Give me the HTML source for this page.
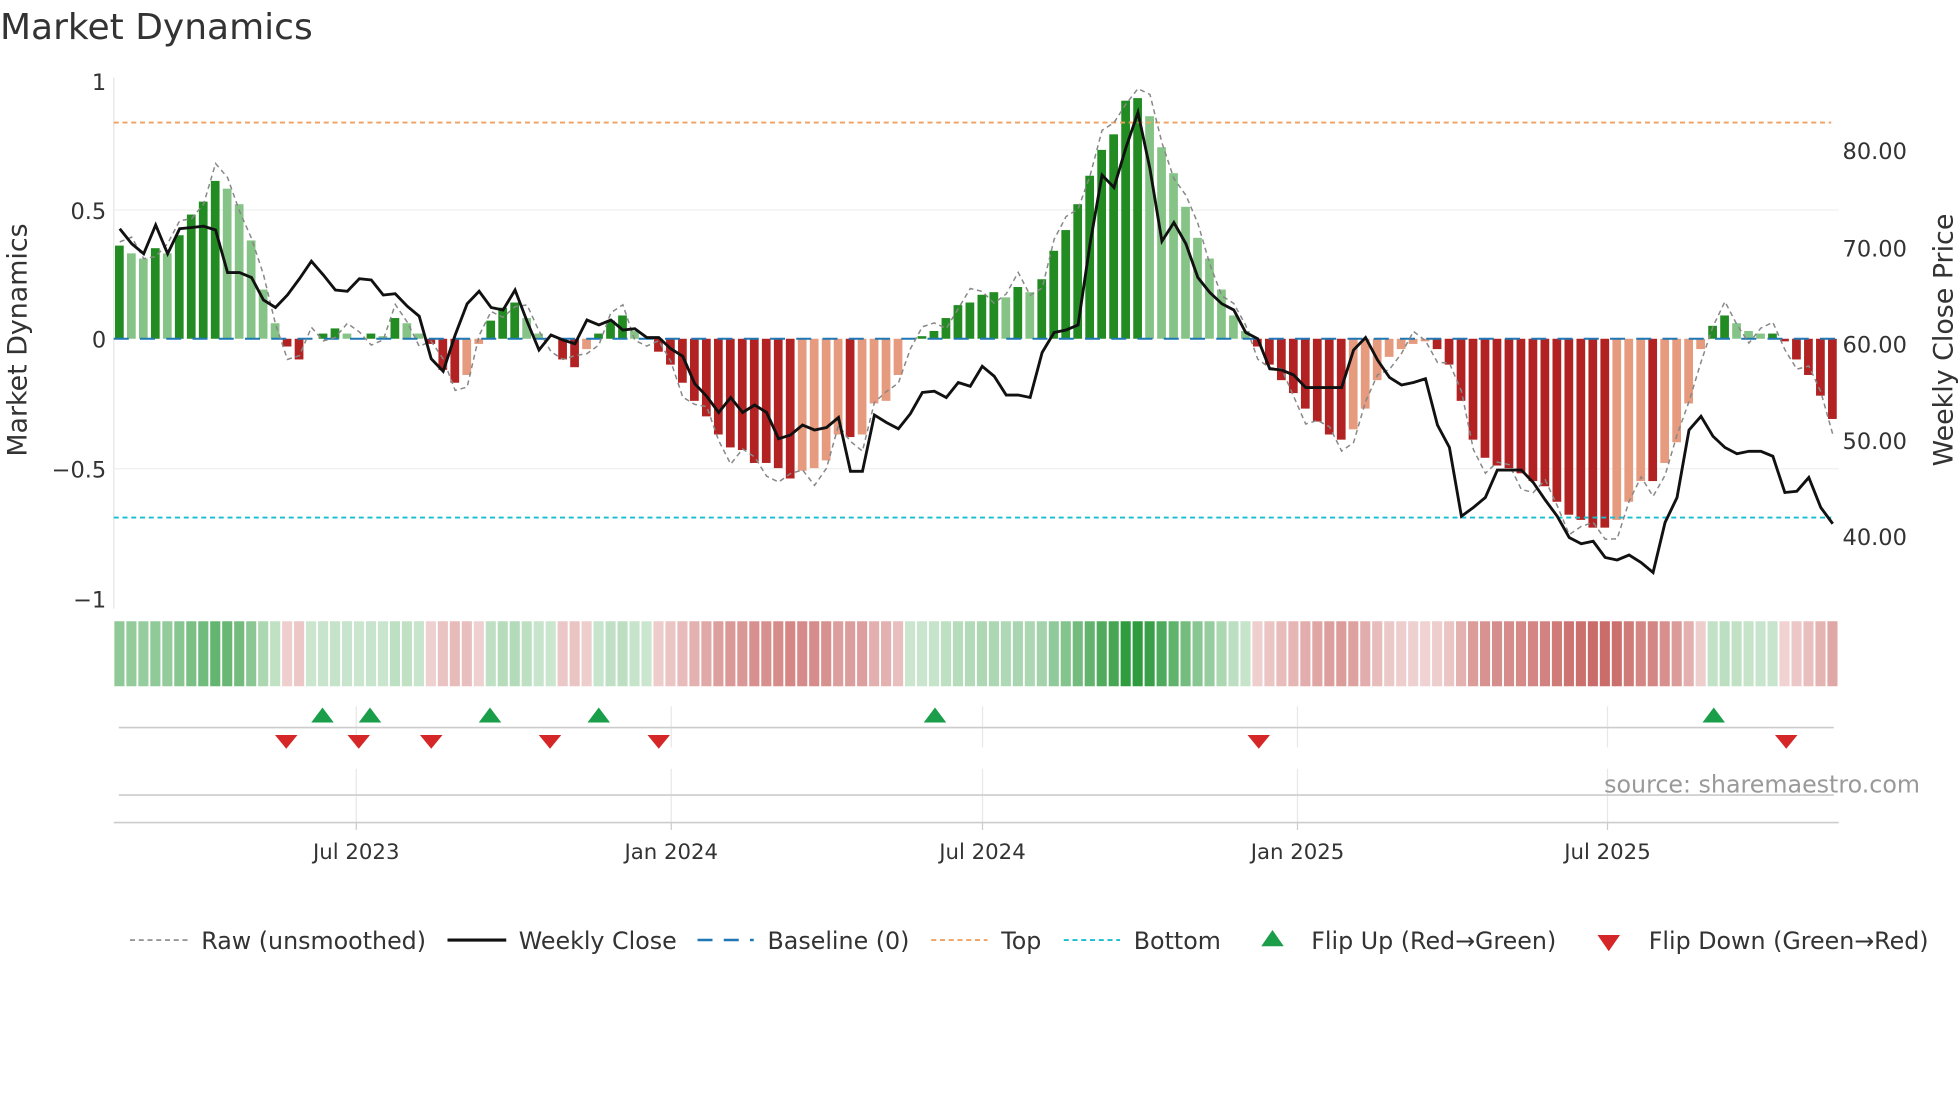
<!DOCTYPE html>
<html><head><meta charset="utf-8"><style>
html,body{margin:0;padding:0;background:#fff;}
svg{display:block;font-family:"DejaVu Sans","Liberation Sans",sans-serif;}
</style></head><body>
<svg id="c" width="1960" height="1102" viewBox="0 0 1568 881.6" xmlns="http://www.w3.org/2000/svg">
<text x="0" y="31" font-size="28.8" fill="#333">Market Dynamics</text>
<text transform="translate(21,272) rotate(-90)" text-anchor="middle" font-size="21.5" fill="#333">Market Dynamics</text>
<text transform="translate(1562,272) rotate(-90)" text-anchor="middle" font-size="21.5" fill="#333">Weekly Close Price</text>
<g font-size="18" fill="#333" text-anchor="end">
<text x="85" y="72">1</text><text x="85" y="175">0.5</text><text x="85" y="278">0</text><text x="85" y="382">−0.5</text><text x="85" y="486">−1</text>
</g>
<g font-size="18" fill="#333">
<text x="1474" y="127">80.00</text><text x="1474" y="205">70.00</text><text x="1474" y="282">60.00</text><text x="1474" y="359">50.00</text><text x="1474" y="436">40.00</text>
</g>
<line x1="91" y1="62" x2="91" y2="487" stroke="#e4e4e4"/>
<line x1="91" y1="168" x2="1471" y2="168" stroke="#eef0f0"/>
<line x1="91" y1="375" x2="1471" y2="375" stroke="#eef0f0"/>
<g id="bars"></g>
<line x1="91" y1="271" x2="1471" y2="271" stroke="#1f77b4" stroke-width="1.6" stroke-dasharray="12,9"/>
<line x1="91" y1="98" x2="1465" y2="98" stroke="#f0a060" stroke-width="1.5" stroke-dasharray="4,3"/>
<line x1="91" y1="414" x2="1465" y2="414" stroke="#17becf" stroke-width="1.5" stroke-dasharray="4,3"/>
<polyline id="raw" fill="none" stroke="#888" stroke-width="1.2" stroke-dasharray="4,3"/>
<polyline id="close" fill="none" stroke="#111" stroke-width="2.3"/>
<g id="heat"></g>
<g stroke="#e8e8e8">
<line x1="285" y1="565" x2="285" y2="598"/><line x1="537" y1="565" x2="537" y2="598"/><line x1="786" y1="565" x2="786" y2="598"/><line x1="1038" y1="565" x2="1038" y2="598"/><line x1="1286" y1="565" x2="1286" y2="598"/>
<line x1="285" y1="615" x2="285" y2="658"/><line x1="537" y1="615" x2="537" y2="658"/><line x1="786" y1="615" x2="786" y2="658"/><line x1="1038" y1="615" x2="1038" y2="658"/><line x1="1286" y1="615" x2="1286" y2="658"/>
</g>
<line x1="95" y1="582" x2="1467" y2="582" stroke="#ccc" stroke-width="1.3"/>
<line x1="95" y1="636" x2="1467" y2="636" stroke="#ccc" stroke-width="1.3"/>
<line x1="91" y1="658" x2="1471" y2="658" stroke="#ccc" stroke-width="1.3"/>
<g id="tri"></g>
<text x="1536" y="634" text-anchor="end" font-size="19" fill="#999">source: sharemaestro.com</text>
<g font-size="17" fill="#333" text-anchor="middle">
<line x1="285" y1="658" x2="285" y2="664" stroke="#ccc"/><line x1="537" y1="658" x2="537" y2="664" stroke="#ccc"/><line x1="786" y1="658" x2="786" y2="664" stroke="#ccc"/><line x1="1038" y1="658" x2="1038" y2="664" stroke="#ccc"/><line x1="1286" y1="658" x2="1286" y2="664" stroke="#ccc"/>
<text x="285" y="687">Jul 2023</text><text x="537" y="687">Jan 2024</text><text x="786" y="687">Jul 2024</text><text x="1038" y="687">Jan 2025</text><text x="1286" y="687">Jul 2025</text>
</g>
<g font-size="19" fill="#333">
<line x1="104" y1="752" x2="150" y2="752" stroke="#888" stroke-width="1.3" stroke-dasharray="4,3"/>
<text x="161" y="759">Raw (unsmoothed)</text>
<line x1="358" y1="752" x2="405" y2="752" stroke="#111" stroke-width="2.5"/>
<text x="415" y="759">Weekly Close</text>
<line x1="558" y1="752" x2="603" y2="752" stroke="#1f77b4" stroke-width="2" stroke-dasharray="12,9"/>
<text x="614" y="759">Baseline (0)</text>
<line x1="745" y1="752" x2="790" y2="752" stroke="#f0a060" stroke-width="1.5" stroke-dasharray="4,3"/>
<text x="801" y="759">Top</text>
<line x1="851" y1="752" x2="896" y2="752" stroke="#17becf" stroke-width="1.5" stroke-dasharray="4,3"/>
<text x="907" y="759">Bottom</text>
<polygon points="1009,757 1027,757 1018,744" fill="#1a9e4a"/>
<text x="1049" y="759">Flip Up (Red→Green)</text>
<polygon points="1278,748 1296,748 1287,761" fill="#d62728"/>
<text x="1319" y="759">Flip Down (Green→Red)</text>
</g>
</svg>
<script>
var v=[.36,.33,.31,.35,.33,.40,.48,.53,.61,.58,.52,.38,.19,.06,-.03,-.08,0,.02,.04,.02,0,.02,.01,.08,.06,.02,-.02,-.12,-.17,-.14,-.02,.07,.12,.14,.08,.02,0,-.08,-.11,-.04,.02,.07,.09,.03,0,-.05,-.1,-.17,-.24,-.3,-.37,-.42,-.43,-.48,-.48,-.5,-.54,-.51,-.5,-.47,-.37,-.38,-.37,-.25,-.24,-.14,0,.01,.03,.08,.13,.14,.17,.18,.16,.2,.18,.23,.34,.42,.52,.63,.73,.79,.92,.93,.86,.74,.64,.51,.39,.31,.19,.09,.03,-.03,-.1,-.16,-.21,-.27,-.32,-.37,-.39,-.35,-.27,-.16,-.07,-.04,-.02,-.01,-.04,-.1,-.24,-.39,-.46,-.49,-.5,-.52,-.55,-.57,-.63,-.68,-.7,-.73,-.73,-.7,-.63,-.55,-.55,-.48,-.4,-.25,-.04,.05,.09,.06,.03,.02,.02,-.01,-.08,-.14,-.22,-.31];
var cy=[183,195,203,180,203,183,182,181,184,218,218,222,240,246,236,223,209,220,232,233,223,224,236,235,245,253,287,297,268,243,233,246,248,232,257,280,268,272,275,256,260,256,264,263,270,270,279,285,307,317,330,318,330,324,330,351,348,340,344,342,334,377,377,332,338,343,331,314,313,318,306,309,293,301,316,316,318,282,266,264,260,195,140,150,118,90,135,193,178,195,222,234,243,248,266,271,295,296,300,310,310,310,310,280,270,288,302,308,306,303,340,358,413,406,398,376,376,376,386,400,413,430,435,433,446,448,444,450,458,418,398,344,333,349,358,363,361,361,365,394,393,382,406,419];
var n=v.length,x0=91,w=(1471-91)/n,ns="http://www.w3.org/2000/svg";
function el(t,a,p){var e=document.createElementNS(ns,t);for(var k in a)e.setAttribute(k,a[k]);p.appendChild(e);}
var B=document.getElementById('bars'),H=document.getElementById('heat'),raw=[],cl=[];
for(var i=0;i<n;i++){var a=v[i],p=i?v[i-1]:a,x=x0+i*w+1,c;
if(a>=0)c=(a>=p)?'#228b22':'#86c386';else c=(a<=p)?'#b22222':'#e69a7e';
var y=271-207*a;el('rect',{x:x,y:Math.min(y,271),width:w-2.6,height:Math.abs(271-y),fill:c},B);
var al=0.25+0.75*Math.min(1,Math.abs(a)/0.93);
el('rect',{x:x0+i*w+0.5,y:497,width:w-1.5,height:52,fill:a>=0?'#2e9b3e':'#c0504d','fill-opacity':al},H);
var r=a*1.04+Math.sin(i*1.7)*0.05;raw.push((x0+i*w+w/2)+','+(271-207*r));cl.push((x0+i*w+w/2)+','+cy[i]);}
document.getElementById('raw').setAttribute('points',raw.join(' '));
document.getElementById('close').setAttribute('points',cl.join(' '));
var T=document.getElementById('tri');
[258,296,392,479,748,1371].forEach(function(x){el('polygon',{points:(x-9)+',578 '+(x+9)+',578 '+x+',566',fill:'#1a9e4a'},T);});
[229,287,345,440,527,1007,1429].forEach(function(x){el('polygon',{points:(x-9)+',588 '+(x+9)+',588 '+x+',599',fill:'#d62728'},T);});
</script>
</body></html>
